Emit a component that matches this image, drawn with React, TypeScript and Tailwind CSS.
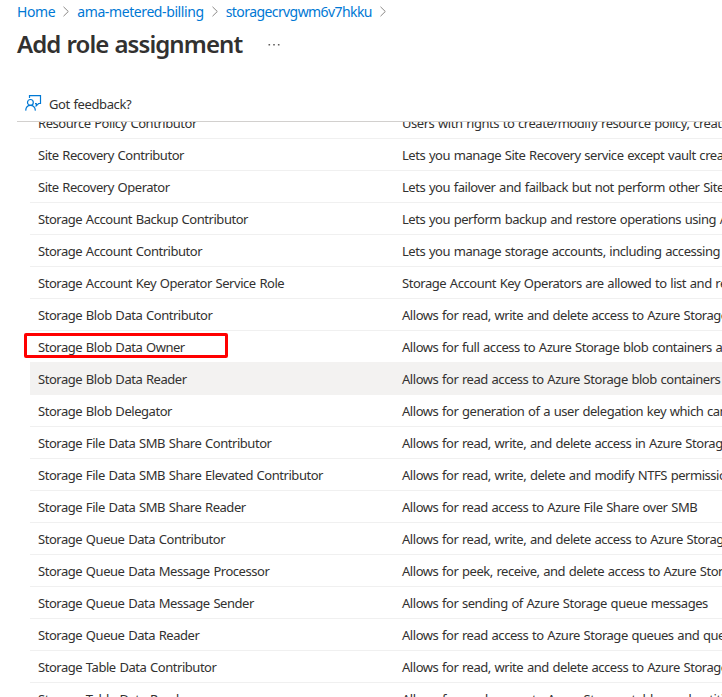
type Role = { name: string; description: string; hovered?: boolean; marked?: boolean };

const roles: Role[] = [
  { name: "Resource Policy Contributor", description: "Users with rights to create/modify resource policy, create" },
  { name: "Site Recovery Contributor", description: "Lets you manage Site Recovery service except vault creation" },
  { name: "Site Recovery Operator", description: "Lets you failover and failback but not perform other Site" },
  { name: "Storage Account Backup Contributor", description: "Lets you perform backup and restore operations using Azure" },
  { name: "Storage Account Contributor", description: "Lets you manage storage accounts, including accessing" },
  { name: "Storage Account Key Operator Service Role", description: "Storage Account Key Operators are allowed to list and regenerate" },
  { name: "Storage Blob Data Contributor", description: "Allows for read, write and delete access to Azure Storage" },
  { name: "Storage Blob Data Owner", description: "Allows for full access to Azure Storage blob containers and", marked: true },
  { name: "Storage Blob Data Reader", description: "Allows for read access to Azure Storage blob containers", hovered: true },
  { name: "Storage Blob Delegator", description: "Allows for generation of a user delegation key which can" },
  { name: "Storage File Data SMB Share Contributor", description: "Allows for read, write, and delete access in Azure Storage" },
  { name: "Storage File Data SMB Share Elevated Contributor", description: "Allows for read, write, delete and modify NTFS permission" },
  { name: "Storage File Data SMB Share Reader", description: "Allows for read access to Azure File Share over SMB" },
  { name: "Storage Queue Data Contributor", description: "Allows for read, write, and delete access to Azure Storage" },
  { name: "Storage Queue Data Message Processor", description: "Allows for peek, receive, and delete access to Azure Storage" },
  { name: "Storage Queue Data Message Sender", description: "Allows for sending of Azure Storage queue messages" },
  { name: "Storage Queue Data Reader", description: "Allows for read access to Azure Storage queues and queue" },
  { name: "Storage Table Data Contributor", description: "Allows for read, write and delete access to Azure Storage" },
  { name: "Storage Table Data Reader", description: "Allows for read access to Azure Storage tables and entities" },
];

function Chevron() {
  return (
    <svg width="6" height="11" viewBox="0 0 6 11" fill="none" stroke="#8a8886" strokeWidth="1">
      <path d="M0.5 0.8 5.3 5.5 0.5 10.2" />
    </svg>
  );
}

function FeedbackIcon() {
  return (
    <svg className="mb-[2px]" width="17" height="17" viewBox="0 0 17 17" fill="none" stroke="#0078d4" strokeWidth="1.2">
      <path d="M4.5 3V0.6H15.5V8.5H13.6L11.2 10.9V8.5H10" />
      <circle cx="5.4" cy="7.4" r="2.9" />
      <path d="M0.7 15.6C0.9 12.4 2.7 10.4 5.4 10.4S10.1 12.4 10.4 15.6" />
    </svg>
  );
}

function RoleRow({ role }: { role: Role }) {
  return (
    <div
      className={
        "relative flex shrink-0 items-center border-b pl-2 " +
        (role.hovered ? "-mt-px h-[33px] border-[#f3f2f1] bg-[#f3f2f1] pt-px" : "h-8 border-[#f0f0f0]")
      }
    >
      <span className="w-[364px] shrink-0">{role.name}</span>
      <span>{role.description}</span>
      {role.marked && (
        <div className="absolute top-[2px] -left-[6px] h-[25px] w-[204px] rounded-[2px] border-[3px] border-[#ff0000]" />
      )}
    </div>
  );
}

export default function App() {
  return (
    <div className="flex h-[697px] w-[722px] flex-col overflow-hidden bg-white font-['Noto_Sans','Open_Sans',sans-serif] text-[13px] leading-5 tracking-[-0.46px] whitespace-nowrap text-[#323130] [word-spacing:0.75px]">
      <nav className="flex h-[23px] shrink-0 items-center gap-2 pl-[17px] text-[14px] text-[#0078d4]">
        <a className="tracking-[-0.4px]">Home</a>
        <Chevron />
        <a className="tracking-[-0.4px]">ama-metered-billing</a>
        <Chevron />
        <a className="tracking-[-0.58px]">storagecrvgwm6v7hkku</a>
        <Chevron />
      </nav>
      <header className="flex h-[42px] shrink-0 items-center gap-[26px] pl-[17px]">
        <h1 className="text-[24px] leading-8 font-semibold tracking-[-0.92px]">Add role assignment</h1>
        <svg className="mt-px" width="12" height="2" viewBox="0 0 12 2" fill="#605e5c">
          <path d="M0.5 0h1.6v1.6H0.5zM5.2 0h1.6v1.6H5.2zM9.9 0h1.6v1.6H9.9z" />
        </svg>
      </header>
      <div className="mt-[22px] ml-[17px] flex h-[35px] shrink-0 items-center gap-[7px] border-b border-[#d2d0ce] pl-2">
        <FeedbackIcon />
        <span className="tracking-[-0.4px]">Got feedback?</span>
      </div>
      <main className="flex min-h-0 flex-1 flex-col overflow-hidden pl-[30px]">
        <div className="-mt-[15px] flex flex-col">
          {roles.map((role) => (
            <RoleRow key={role.name} role={role} />
          ))}
        </div>
      </main>
    </div>
  );
}
